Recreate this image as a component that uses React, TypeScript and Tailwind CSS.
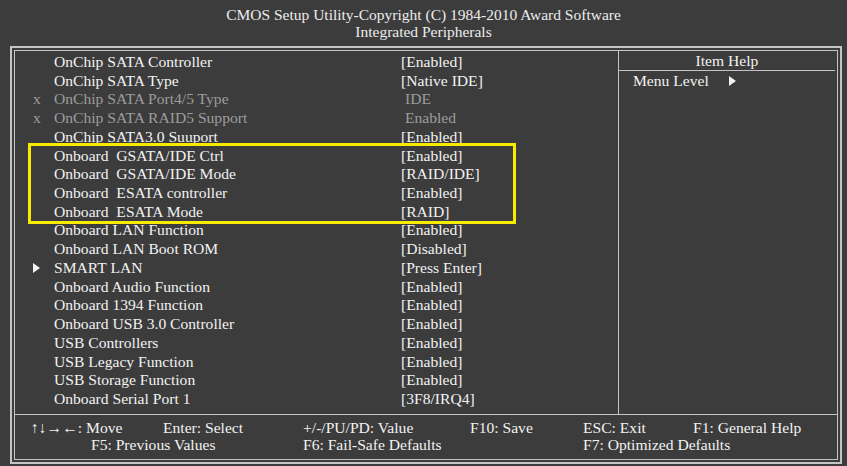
const rows: { label: string; value: string; mark?: "x" | "arrow"; dim?: boolean }[] = [
  { label: "OnChip SATA Controller", value: "[Enabled]" },
  { label: "OnChip SATA Type", value: "[Native IDE]" },
  { label: "OnChip SATA Port4/5 Type", value: "IDE", mark: "x", dim: true },
  { label: "OnChip SATA RAID5 Support", value: "Enabled", mark: "x", dim: true },
  { label: "OnChip SATA3.0 Suuport", value: "[Enabled]" },
  { label: "Onboard\u00a0 GSATA/IDE Ctrl", value: "[Enabled]" },
  { label: "Onboard\u00a0 GSATA/IDE Mode", value: "[RAID/IDE]" },
  { label: "Onboard\u00a0 ESATA controller", value: "[Enabled]" },
  { label: "Onboard\u00a0 ESATA Mode", value: "[RAID]" },
  { label: "Onboard LAN Function", value: "[Enabled]" },
  { label: "Onboard LAN Boot ROM", value: "[Disabled]" },
  { label: "SMART LAN", value: "[Press Enter]", mark: "arrow" },
  { label: "Onboard Audio Function", value: "[Enabled]" },
  { label: "Onboard 1394 Function", value: "[Enabled]" },
  { label: "Onboard USB 3.0 Controller", value: "[Enabled]" },
  { label: "USB Controllers", value: "[Enabled]" },
  { label: "USB Legacy Function", value: "[Enabled]" },
  { label: "USB Storage Function", value: "[Enabled]" },
  { label: "Onboard Serial Port 1", value: "[3F8/IRQ4]" },
];

function Arrow() {
  return (
    <svg width="7" height="10" viewBox="0 0 7 10" className="inline-block">
      <path d="M0 0 L7 5 L0 10 Z" fill="#f2f2f2" />
    </svg>
  );
}

export default function App() {
  return (
    <div className="w-[847px] h-[466px] bg-[#3c3c3c] text-[#f2f2f2] font-['Liberation_Serif',serif] overflow-hidden">
      <header className="h-[46px] flex flex-col items-center pt-[6px] text-[15.5px] leading-[17px] text-[#ececec]">
        <div className="whitespace-nowrap">
          CMOS Setup Utility-Copyright (C) 1984-2010 Award Software
        </div>
        <div className="whitespace-nowrap">Integrated Peripherals</div>
      </header>

      <div className="ml-[10px] w-[832px] h-[418px] border-2 border-[#c4c4c4] p-[2px]">
        <div className="relative h-full border border-[#c4c4c4] flex flex-col">
          <div className="flex flex-1">
            <div className="w-[604px] border-r border-[#c4c4c4] pt-[2px] pl-[18px] text-[15.6px] leading-[18.72px]">
              {rows.map((r) => (
                <div key={r.label} className={`flex whitespace-nowrap ${r.dim ? "text-[#9d9d9d]" : ""}`}>
                  <span className="w-[21px] flex items-center">
                    {r.mark === "x" ? "x" : r.mark === "arrow" ? <Arrow /> : ""}
                  </span>
                  <span className="w-[347px]">{r.label}</span>
                  <span className={r.dim ? "pl-[4px]" : ""}>{r.value}</span>
                </div>
              ))}
            </div>
            <div className="flex-1 flex flex-col text-[15.6px] leading-[18px]">
              <div className="h-[20px] mr-[2px] border-b border-[#c4c4c4] text-center pt-[1px]">Item Help</div>
              <div className="flex items-center pl-[14px] pt-[1px] gap-[20px]">
                <span>Menu Level</span>
                <Arrow />
              </div>
            </div>
          </div>

          <div className="h-[45px] border-t border-[#c4c4c4] pt-[4px] text-[15.6px] leading-[17px] whitespace-nowrap">
            <div className="flex pl-[16px]">
              <span className="w-[132px]">↑↓→←: Move</span>
              <span className="w-[140px]">Enter: Select</span>
              <span className="w-[167px]">+/-/PU/PD: Value</span>
              <span className="w-[113px]">F10: Save</span>
              <span className="w-[110px]">ESC: Exit</span>
              <span>F1: General Help</span>
            </div>
            <div className="flex pl-[76px]">
              <span className="w-[212px]">F5: Previous Values</span>
              <span className="w-[280px]">F6: Fail-Safe Defaults</span>
              <span>F7: Optimized Defaults</span>
            </div>
          </div>

          <div className="absolute left-[13px] top-[92px] w-[488px] h-[81px] border-[3px] border-[#f7ec00] pointer-events-none" />
        </div>
      </div>
    </div>
  );
}
